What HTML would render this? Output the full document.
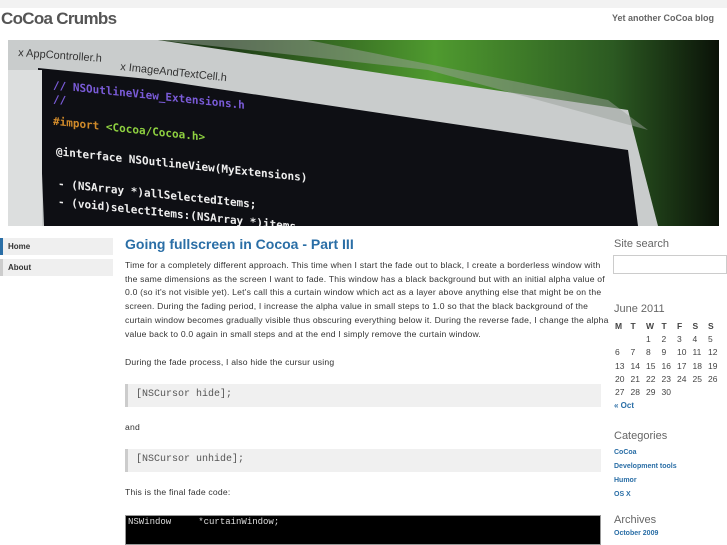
<!DOCTYPE html>
<html><head><meta charset="utf-8"><style>
*{margin:0;padding:0;box-sizing:border-box}
body{width:727px;height:545px;overflow:hidden;background:#fff;font-family:"Liberation Sans",sans-serif;color:#333;position:relative}
.topbar{position:absolute;left:0;top:0;width:727px;height:8px;background:#f2f2f2}
.title{position:absolute;left:1px;top:9px;font-size:17px;font-weight:bold;color:#555;letter-spacing:-0.7px}
.tag{position:absolute;right:13px;top:13px;font-size:9px;font-weight:bold;color:#666}
.hdr{position:absolute;left:8px;top:40px;width:711px;height:186px}
.nav{position:absolute;left:0;width:113px;height:17px;background:#efefef;font-size:8px;font-weight:bold;color:#333;padding:4px 0 0 7px}
.nav.b{border-left:3px solid #2a6ea6;padding-left:5px}
.nav.g{border-left:3px solid #ccc;padding-left:5px}
h1{position:absolute;left:125px;top:236px;font-size:14px;color:#2a6ea6;font-weight:bold}
.p{position:absolute;left:125px;font-size:8.6px;letter-spacing:0.2px;line-height:13.7px;color:#333;white-space:nowrap}
.code{position:absolute;left:125px;width:476px;height:23px;background:#f0f0f0;border-left:3px solid #ccc;font-family:"Liberation Mono",monospace;font-size:10px;color:#555;padding:5px 0 0 8px}
.blk{position:absolute;left:125px;top:515px;width:476px;height:30px;background:#000;border:1px solid #999;font-family:"Liberation Mono",monospace;font-size:9px;color:#ddd;padding:1px 2px;white-space:pre}
.side{position:absolute;left:614px}
.sh{font-size:11px;color:#666}
.lnk{font-size:7px;font-weight:bold;color:#2a6ea6}
table{border-collapse:collapse;font-size:8.5px;color:#444}
td,th{width:15.5px;height:13.3px;text-align:left;padding:0 0 0 1px}
th{font-weight:bold;font-size:8.5px}
</style></head><body>
<div class="topbar"></div>
<div class="title">CoCoa Crumbs</div>
<div class="tag">Yet another CoCoa blog</div>
<svg class="hdr" viewBox="0 0 711 186" xmlns="http://www.w3.org/2000/svg">
<defs><linearGradient id="bg" x1="0" x2="1" y1="0" y2="0"><stop offset="0.3" stop-color="#1d3a16"/><stop offset="0.6" stop-color="#4f9a2f"/><stop offset="0.85" stop-color="#2c5a22"/><stop offset="1" stop-color="#0a1208"/></linearGradient></defs>
<rect width="711" height="186" fill="url(#bg)"/>
<polygon points="0,0 150,0 620,70 650,186 0,186" fill="#c9cccc"/>
<polygon points="0,0 150,0 420,30 640,90 600,60 300,0" fill="#9aa09a" opacity="0.5"/>
<polygon points="30,28 150,40 620,110 630,186 36,186" fill="#0e0f14"/>
<rect x="0" y="30" width="34" height="156" fill="#dcdede"/>
<g font-family="Liberation Sans" font-size="11" fill="#333"><text x="10" y="16" transform="rotate(4 10 16)">x AppController.h</text><text x="112" y="30" transform="rotate(6 112 30)">x ImageAndTextCell.h</text></g>
<g font-family="DejaVu Sans Mono" font-size="11" font-weight="bold" transform="skewY(6)">
<text x="45" y="44" fill="#7a5bd8">//  NSOutlineView_Extensions.h</text>
<text x="45" y="58" fill="#7a5bd8">//</text>
<text x="45" y="80" fill="#d08a2a">#import <tspan fill="#8ed040">&lt;Cocoa/Cocoa.h&gt;</tspan></text>
<text x="48" y="110" fill="#eee">@interface NSOutlineView(MyExtensions)</text>
<text x="50" y="142" fill="#eee">- (NSArray *)allSelectedItems;</text>
<text x="50" y="160" fill="#eee">- (void)selectItems:(NSArray *)items</text>
</g>
</svg>
<div class="nav b" style="top:238px">Home</div>
<div class="nav g" style="top:259px">About</div>
<h1>Going fullscreen in Cocoa - Part III</h1>
<div class="p" style="top:259px">Time for a completely different approach. This time when I start the fade out to black, I create a borderless window with<br>the same dimensions as the screen I want to fade. This window has a black background but with an initial alpha value of<br>0.0 (so it's not visible yet). Let's call this a curtain window which act as a layer above anything else that might be on the<br>screen. During the fading period, I increase the alpha value in small steps to 1.0 so that the black background of the<br>curtain window becomes gradually visible thus obscuring everything below it. During the reverse fade, I change the alpha<br>value back to 0.0 again in small steps and at the end I simply remove the curtain window.</div>
<div class="p" style="top:356px">During the fade process, I also hide the cursur using</div>
<div class="code" style="top:384px">[NSCursor hide];</div>
<div class="p" style="top:421px">and</div>
<div class="code" style="top:449px">[NSCursor unhide];</div>
<div class="p" style="top:486px">This is the final fade code:</div>
<div class="blk">NSWindow     *curtainWindow;</div>
<div class="side" style="top:238px"><div class="sh">Site search</div></div>
<div style="position:absolute;left:613px;top:255px;width:114px;height:19px;border:1px solid #ccc"></div>
<div class="side" style="top:303px"><div class="sh">June 2011</div>
<table style="margin-top:4px"><tr><th>M</th><th>T</th><th>W</th><th>T</th><th>F</th><th>S</th><th>S</th></tr>
<tr><td></td><td></td><td>1</td><td>2</td><td>3</td><td>4</td><td>5</td></tr>
<tr><td>6</td><td>7</td><td>8</td><td>9</td><td>10</td><td>11</td><td>12</td></tr>
<tr><td>13</td><td>14</td><td>15</td><td>16</td><td>17</td><td>18</td><td>19</td></tr>
<tr><td>20</td><td>21</td><td>22</td><td>23</td><td>24</td><td>25</td><td>26</td></tr>
<tr><td>27</td><td>28</td><td>29</td><td>30</td><td></td><td></td><td></td></tr></table>
<div class="lnk" style="font-size:8px;margin-top:2px">« Oct</div></div>
<div class="side" style="top:430px"><div class="sh">Categories</div>
<div class="lnk" style="margin-top:4px;line-height:14px">CoCoa<br>Development tools<br>Humor<br>OS X</div></div>
<div class="side" style="top:514px"><div class="sh">Archives</div>
<div class="lnk" style="margin-top:4px">October 2009</div></div>
</body></html>
